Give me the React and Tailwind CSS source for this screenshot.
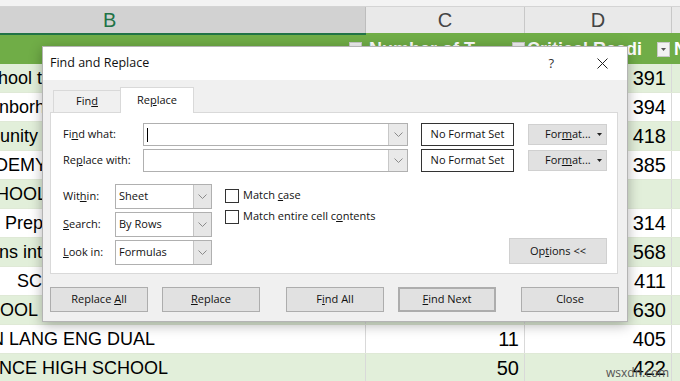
import React from 'react';

const rows = [
  { b: 'hool tech', off: -2, c: '', d: '391' },
  { b: 'nborhood', off: -1, c: '', d: '394' },
  { b: 'unity', off: 0, c: '', d: '418' },
  { b: 'DEMY', off: -5, c: '', d: '385' },
  { b: 'HOOL', off: -4, c: '', d: '' },
  { b: 'Prep', off: 5, c: '', d: '314' },
  { b: 'ns int', off: -1, c: '', d: '568' },
  { b: 'SCH', off: 17, c: '', d: '411' },
  { b: 'OOL', off: 0, c: '', d: '630' },
  { b: 'N LANG ENG DUAL', off: -9, c: '11', d: '405' },
  { b: 'NCE HIGH SCHOOL', off: -1, c: '50', d: '422' },
];

const Chevron = () => (
  <svg width="9" height="5" viewBox="0 0 9 5" fill="none">
    <path d="M0.5 0.5 L4.5 4.5 L8.5 0.5" stroke="#8a8a8a" strokeWidth="1" />
  </svg>
);

const FilterBtn = () => (
  <div className="w-[13px] h-[15px] bg-[#f2f2f2] border border-[#c8c8c8] flex items-center justify-center">
    <svg width="5" height="3" viewBox="0 0 5 3">
      <path d="M0 0 L5 0 L2.5 3 Z" fill="#555" />
    </svg>
  </div>
);

const Combo = ({ value }) => (
  <div className="w-[97px] h-[25px] flex bg-white border border-[#b0b0b0]">
    <div className="flex-1 pl-[3px] flex items-center text-[11px]">{value}</div>
    <div className="w-[18px] bg-[#e6e6e6] border-l border-[#c4c4c4] flex items-center justify-center">
      <Chevron />
    </div>
  </div>
);

const Btn = ({ children, className = '' }) => (
  <div
    className={`w-[98px] h-[25px] bg-[#e1e1e1] border border-[#adadad] flex items-center justify-center text-[11px] ${className}`}
  >
    <span>{children}</span>
  </div>
);

const Check = ({ children }) => (
  <div className="flex items-center h-[21px]">
    <div className="w-[14px] h-[14px] bg-white border border-[#333]" />
    <span className="ml-[4px] text-[11px]">{children}</span>
  </div>
);

export default function App() {
  return (
    <div className="relative w-[680px] h-[381px] overflow-hidden bg-white font-['Liberation_Sans',Arial,sans-serif] text-black">
      {/* sheet */}
      <div className="h-[7px] bg-[#f3f3f3] border-b border-[#d4d4d4]" />
      <div className="flex h-[26px] text-[20px]">
        <div className="w-[366px] bg-[#d2d2d2] pl-[103px] flex items-center text-[#217346] border-r border-[#bdbdbd]">B</div>
        <div className="w-[159px] bg-[#e9e9e9] flex items-center justify-center text-[#444] border-r border-[#c8c8c8]">C</div>
        <div className="w-[147px] bg-[#e9e9e9] flex items-center justify-center text-[#444] border-r border-[#c8c8c8]">D</div>
        <div className="flex-1 bg-[#e9e9e9]" />
      </div>
      <div className="flex h-[2px]">
        <div className="w-[366px] bg-[#217346]" />
        <div className="flex-1 bg-[#70ad47]" />
      </div>
      <div className="flex h-[29px] bg-[#70ad47] text-white font-bold text-[18px] whitespace-nowrap overflow-hidden">
        <div className="w-[366px] flex items-center justify-end pr-[4px]">
          <FilterBtn />
        </div>
        <div className="w-[159px] flex items-center overflow-hidden pl-[3px]">
          <span className="flex-1 overflow-hidden">Number of T</span>
          <FilterBtn />
        </div>
        <div className="w-[147px] flex items-center overflow-hidden pl-[2px] pr-[2px]">
          <span className="flex-1 overflow-hidden">Critical Readi</span>
          <FilterBtn />
        </div>
        <div className="flex-1 pl-[2px] flex items-center overflow-hidden">N</div>
      </div>
      {rows.map((r, i) => (
        <div
          key={i}
          className={`flex h-[29px] whitespace-nowrap border-b border-[#dfe9d6] ${i % 2 === 0 ? 'bg-[#e2efda]' : 'bg-white'}`}
        >
          <div className="w-[366px] overflow-hidden flex items-center text-[18px] border-r border-[#d9d9d9]">
            <span style={{ marginLeft: r.off }}>{r.b}</span>
          </div>
          <div className="w-[159px] flex items-center justify-end pr-[5px] text-[20px] border-r border-[#d9d9d9]">{r.c}</div>
          <div className="w-[147px] flex items-center justify-end pr-[5px] text-[20px] border-r border-[#d9d9d9]">{r.d}</div>
          <div className="flex-1" />
        </div>
      ))}

      {/* watermark */}
      <div className="absolute left-[606px] top-[364px] text-[12px] text-[#555] font-['Open_Sans',sans-serif]">wsxdn.com</div>

      {/* dialog */}
      <div className="absolute left-[42px] top-[46px] w-[586px] border border-[#b4b4b4] bg-[#f0f0f0] shadow-[0_3px_12px_rgba(0,0,0,0.3)] font-['Open_Sans',sans-serif] text-[#111]">
        <div className="h-[33px] bg-white flex items-center pl-[7px] pr-[19px]">
          <span className="text-[12.5px]">Find and Replace</span>
          <span className="ml-auto text-[13px] text-[#333]">?</span>
          <svg className="ml-[43px]" width="11" height="11" viewBox="0 0 11 11">
            <path d="M0.5 0.5 L10.5 10.5 M10.5 0.5 L0.5 10.5" stroke="#222" strokeWidth="1" />
          </svg>
        </div>

        <div className="pt-[7px]">
          {/* tabs */}
          <div className="flex items-end h-[26px] ml-[10px] -mb-px relative z-10 text-[11px]">
            <div className="w-[67px] h-[23px] border border-[#d9d9d9] border-r-0 bg-[#f0f0f0] flex items-center justify-center">
              <span>Fin<u>d</u></span>
            </div>
            <div className="w-[74px] h-[26px] border border-[#d9d9d9] border-b-0 bg-white flex items-center justify-center">
              <span>Re<u>p</u>lace</span>
            </div>
          </div>

          {/* panel */}
          <div className="ml-[7px] w-[568px] bg-white border border-[#d9d9d9] pl-[12px] pt-[10px] pb-[8px] text-[11px]">
            <div className="flex items-center h-[23px]">
              <div className="w-[80px]">Fi<u>n</u>d what:</div>
              <div className="w-[265px] h-[23px] flex border border-[#b0b0b0]">
                <div className="flex-1 flex items-center pl-[3px]">
                  <div className="w-px h-[14px] bg-black" />
                </div>
                <div className="w-[19px] bg-[#e9e9e9] border-l border-[#c8c8c8] flex items-center justify-center">
                  <Chevron />
                </div>
              </div>
              <div className="ml-[13px] w-[93px] h-[23px] border border-[#333] flex items-center justify-center">No Format Set</div>
              <div className="ml-[14px] w-[79px] h-[21px] bg-[#e1e1e1] border border-[#d0d0d0] flex items-center pl-[16px] pr-[4px]">
                <span>For<u>m</u>at...</span>
                <svg className="ml-auto" width="5" height="3" viewBox="0 0 5 3">
                  <path d="M0 0 L5 0 L2.5 3 Z" fill="#222" />
                </svg>
              </div>
            </div>
            <div className="flex items-center h-[23px] mt-[3px]">
              <div className="w-[80px]">Re<u>p</u>lace with:</div>
              <div className="w-[265px] h-[23px] flex border border-[#b0b0b0]">
                <div className="flex-1" />
                <div className="w-[19px] bg-[#e9e9e9] border-l border-[#c8c8c8] flex items-center justify-center">
                  <Chevron />
                </div>
              </div>
              <div className="ml-[13px] w-[93px] h-[23px] border border-[#333] flex items-center justify-center">No Format Set</div>
              <div className="ml-[14px] w-[79px] h-[21px] bg-[#e1e1e1] border border-[#d0d0d0] flex items-center pl-[16px] pr-[4px]">
                <span>For<u>m</u>at...</span>
                <svg className="ml-auto" width="5" height="3" viewBox="0 0 5 3">
                  <path d="M0 0 L5 0 L2.5 3 Z" fill="#222" />
                </svg>
              </div>
            </div>

            <div className="flex mt-[12px] items-end">
              <div className="flex flex-col gap-[3px]">
                <div className="flex items-center">
                  <div className="w-[52px]">Wit<u>h</u>in:</div>
                  <Combo value="Sheet" />
                </div>
                <div className="flex items-center">
                  <div className="w-[52px]"><u>S</u>earch:</div>
                  <Combo value="By Rows" />
                </div>
                <div className="flex items-center">
                  <div className="w-[52px]"><u>L</u>ook in:</div>
                  <Combo value="Formulas" />
                </div>
              </div>
              <div className="ml-[13px] self-start pt-[1px]">
                <Check>Match <u>c</u>ase</Check>
                <Check>Match entire cell c<u>o</u>ntents</Check>
              </div>
              <div className="ml-auto mr-[10px] mb-[1px] w-[98px] h-[26px] bg-[#e1e1e1] border border-[#d0d0d0] flex items-center justify-center">
                <span>Op<u>t</u>ions &lt;&lt;</span>
              </div>
            </div>
          </div>

          {/* buttons */}
          <div className="flex ml-[7px] mt-[13px] pb-[9px]">
            <Btn>Replace <u>A</u>ll</Btn>
            <Btn className="ml-[14px]"><u>R</u>eplace</Btn>
            <Btn className="ml-[26px]">F<u>i</u>nd All</Btn>
            <Btn className="ml-[14px] border-2 border-[#0078d7]"><u>F</u>ind Next</Btn>
            <Btn className="ml-[25px]">Close</Btn>
          </div>
        </div>
      </div>
    </div>
  );
}
